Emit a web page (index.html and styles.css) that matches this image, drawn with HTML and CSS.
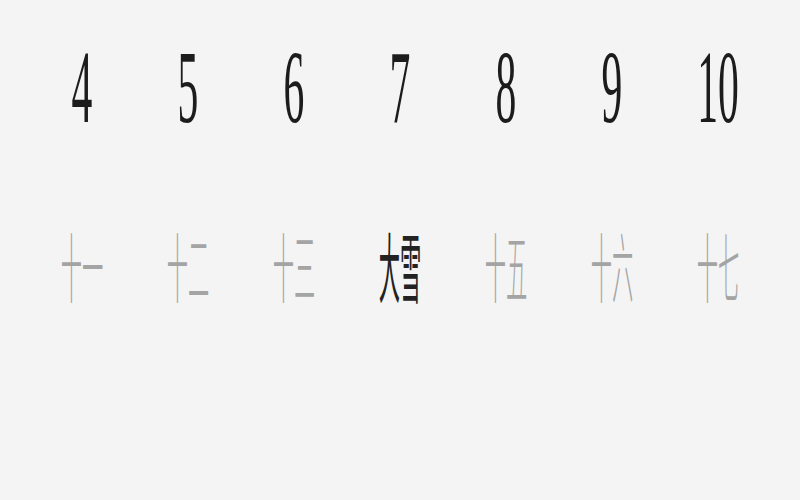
FILE: index.html
```html
<!DOCTYPE html>
<html lang="zh">
<head>
<meta charset="utf-8">
<link rel="stylesheet" href="styles.css">
</head>
<body>
<div class="row">
  <div class="cell"><div class="num">4</div><div class="lunar">十一</div></div>
  <div class="cell"><div class="num">5</div><div class="lunar">十二</div></div>
  <div class="cell"><div class="num">6</div><div class="lunar">十三</div></div>
  <div class="cell"><div class="num">7</div><div class="lunar active">大雪</div></div>
  <div class="cell"><div class="num">8</div><div class="lunar">十五</div></div>
  <div class="cell"><div class="num">9</div><div class="lunar">十六</div></div>
  <div class="cell"><div class="num">10</div><div class="lunar">十七</div></div>
</div>
</body>
</html>
```
FILE: styles.css
```css
html, body {
  margin: 0;
  padding: 0;
  background: #f4f4f4;
  width: 800px;
  height: 500px;
  overflow: hidden;
}
.row {
  display: flex;
  padding: 35px 29px 0;
}
.cell {
  flex: 1 1 0;
  min-width: 0;
  display: flex;
  flex-direction: column;
  align-items: center;
  gap: 87px;
}
.num {
  font-family: "Liberation Serif", serif;
  font-size: 104px;
  line-height: 104px;
  height: 104px;
  color: #1c1c1c;
  transform: scaleX(0.4);
  white-space: nowrap;
}
.lunar {
  font-family: "Noto Sans CJK SC", sans-serif;
  font-weight: 300;
  font-size: 76px;
  line-height: 76px;
  height: 76px;
  color: #a4a4a4;
  transform: scaleX(0.28);
  white-space: nowrap;
}
.lunar.active {
  color: #222;
  font-weight: 400;
}
```
